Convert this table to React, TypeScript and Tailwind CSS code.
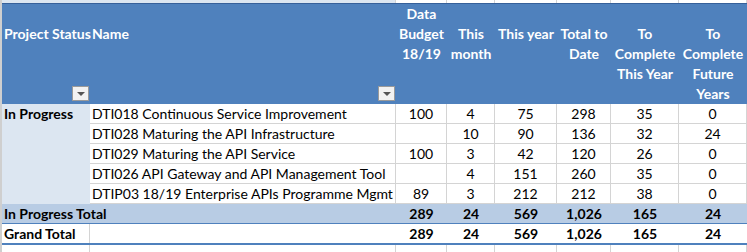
const cols = ['w-[88px]', 'w-[306px]', 'w-[51px]', 'w-[48px]', 'w-[62px]', 'w-[54px]', 'w-[68px]', 'w-[68px]'];

const rows = [
  ['DTI018 Continuous Service Improvement', '100', '4', '75', '298', '35', '0'],
  ['DTI028 Maturing the API Infrastructure', '', '10', '90', '136', '32', '24'],
  ['DTI029 Maturing the API Service', '100', '3', '42', '120', '26', '0'],
  ['DTI026 API Gateway and API Management Tool', '', '4', '151', '260', '35', '0'],
  ['DTIP03 18/19 Enterprise APIs Programme Mgmt', '89', '3', '212', '212', '38', '0'],
];

const totals = ['289', '24', '569', '1,026', '165', '24'];

const FilterButton = () => (
  <div className="absolute right-[1px] bottom-[3px] w-[17px] h-[15px] border border-[#9a9a9a] bg-[#f2f2f2] flex items-center justify-center">
    <div className="w-0 h-0 border-l-[4px] border-r-[4px] border-t-[4px] border-l-transparent border-r-transparent border-t-[#555]" />
  </div>
);

const headers: { lines: string[]; first?: boolean }[] = [
  { lines: ['Data', 'Budget', '18/19'], first: true },
  { lines: ['This', 'month'] },
  { lines: ['This year'] },
  { lines: ['Total to', 'Date'] },
  { lines: ['To', 'Complete', 'This Year'] },
  { lines: ['To', 'Complete', 'Future', 'Years'] },
];

export default function App() {
  return (
    <div className="w-[747px] h-[252px] overflow-hidden bg-white flex font-['Lato',sans-serif] text-[14px] leading-[20px] text-black">
      <div className="w-[2px] shrink-0 bg-[#cfcfcf]" />
      <div className="flex flex-col">
        {/* strip of the row above */}
        <div className="flex h-[3px]">
          <div className={`${cols[0]} bg-[#dce6f1]`} />
          <div className={`${cols[1]} bg-[#dce6f1] border-r border-[#d4d4d4]`} />
          {cols.slice(2).map((c, i) => (
            <div key={i} className={`${c} border-r border-[#d4d4d4]`} />
          ))}
        </div>
        <div className="h-[1px] bg-[#36609a]" />
        {/* header */}
        <div className="flex h-[100px] bg-[#4f81bd] text-white font-bold">
          <div className={`${cols[0]} relative pt-[20px] pl-[2px] whitespace-nowrap`}>
            Project Status
            <FilterButton />
          </div>
          <div className={`${cols[1]} relative pt-[20px] pl-[2px]`}>
            Name
            <FilterButton />
          </div>
          {headers.map((h, i) => (
            <div key={i} className={`${cols[i + 2]} flex flex-col items-center whitespace-nowrap ${h.first ? 'pt-0' : 'pt-[20px]'}`}>
              {h.lines.map((l) => (
                <span key={l}>{l}</span>
              ))}
            </div>
          ))}
        </div>
        {/* body */}
        <div className="flex">
          <div className={`${cols[0]} bg-[#dce6f1] font-bold pl-[2px]`}>In Progress</div>
          <div className="flex flex-col">
            {rows.map((r, ri) => (
              <div key={ri} className="flex h-[20px] border-b border-[#d4d4d4]">
                <div className={`${cols[1]} pl-[2px] border-r border-[#d4d4d4] whitespace-nowrap leading-[19px]`}>{r[0]}</div>
                {r.slice(1).map((v, i) => (
                  <div key={i} className={`${cols[i + 2]} text-center border-r border-[#d4d4d4] leading-[19px]`}>
                    {v}
                  </div>
                ))}
              </div>
            ))}
          </div>
        </div>
        <div className="flex h-[20px] bg-[#b8cce4] font-bold border-b border-[#4f81bd] leading-[19px]">
          <div className={`${cols[0]} pl-[2px] whitespace-nowrap`}>In Progress Total</div>
          <div className={cols[1]} />
          {totals.map((v, i) => (
            <div key={i} className={`${cols[i + 2]} text-center`}>{v}</div>
          ))}
        </div>
        <div className="flex h-[21px] font-bold border-b-2 border-[#4f81bd] leading-[19px]">
          <div className={`${cols[0]} pl-[2px] whitespace-nowrap border-r border-[#d4d4d4]`}>Grand Total</div>
          <div className={cols[1]} />
          {totals.map((v, i) => (
            <div key={i} className={`${cols[i + 2]} text-center`}>{v}</div>
          ))}
        </div>
        <div className="flex flex-1">
          <div className={`${cols[0]} border-r border-[#d4d4d4]`} />
          {cols.slice(1).map((c, i) => (
            <div key={i} className={`${c} border-r border-[#d4d4d4]`} />
          ))}
        </div>
      </div>
    </div>
  );
}
